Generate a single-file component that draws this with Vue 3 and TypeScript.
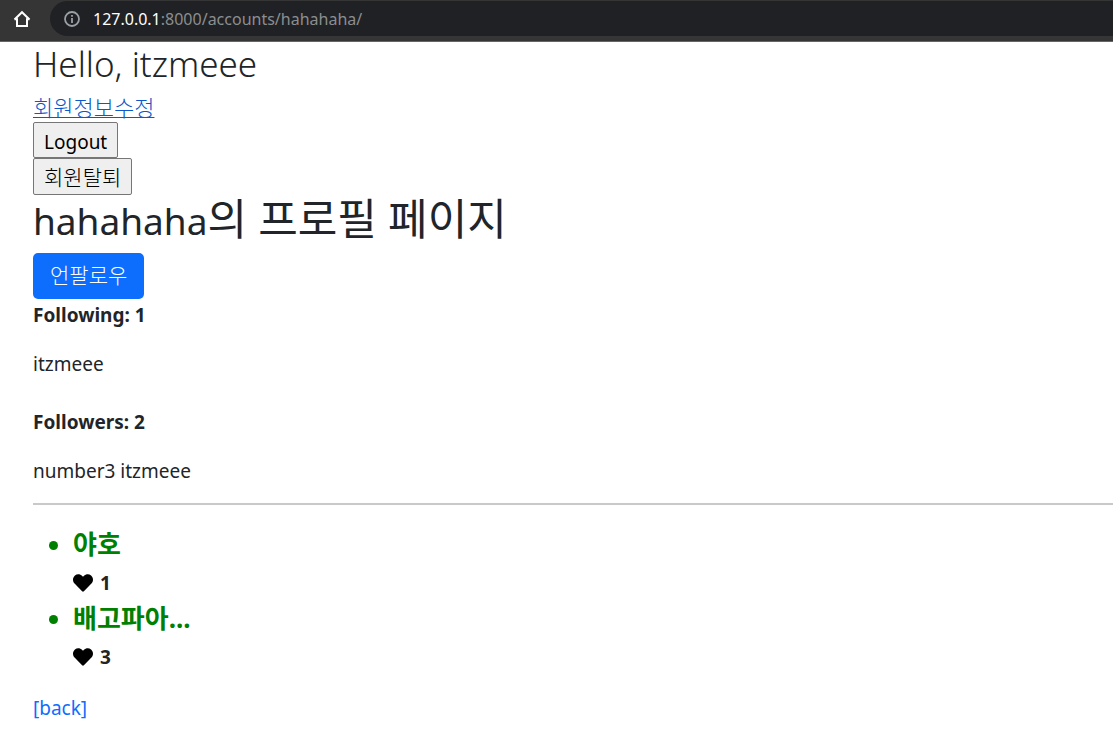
<script setup lang="ts">
interface Post { title: string; likes: number }
const posts: Post[] = [
  { title: '야호', likes: 1 },
  { title: '배고파아...', likes: 3 },
]
</script>

<template>
  <div class="window">
    <header class="toolbar">
      <button class="home" type="button" aria-label="Home">
        <svg width="18" height="18" viewBox="0 0 18 18" fill="none" stroke="#fff" stroke-width="2"><path d="M1.500 9.500 9 2.200l7.500 7.300M1.500 9.300H4V16h10V9.300h2.500" /></svg>
      </button>
      <div class="address">
        <svg width="16" height="16" viewBox="0 0 16 16" fill="none" stroke="#9aa0a6" stroke-width="1.8"><circle cx="8" cy="8" r="7" /><path d="M8 7v5M8 4v1.800" /></svg>
        <span class="url"><span class="host">127.0.0.1</span>:8000/accounts/hahahaha/</span>
      </div>
    </header>
    <main class="page">
      <h3>Hello, itzmeee</h3>
      <a class="edit" href="#">회원정보수정</a>
      <form @submit.prevent><button class="plain" type="submit">Logout</button></form>
      <form @submit.prevent><button class="plain korean" type="submit">회원탈퇴</button></form>
      <h1><span class="user">hahahaha</span>의 프로필 페이지</h1>
      <form class="follow" @submit.prevent><button class="primary" type="submit">언팔로우</button></form>
      <p class="count">Following: 1</p>
      <p class="names">itzmeee</p>
      <p class="count">Followers: 2</p>
      <p class="names last">number3 itzmeee</p>
      <hr />
      <ul>
        <li v-for="post in posts" :key="post.title">
          <h4>{{ post.title }}</h4>
          <div class="likes">
            <svg width="20" height="20" viewBox="0 0 512 512"><path d="M462.3 62.6C407.5 15.9 326 24.3 275.700 76.200L256 96.500l-19.700-20.300C186.100 24.300 104.500 15.900 49.700 62.600c-62.800 53.600-66.100 149.800-9.900 207.900l193.500 199.800c12.500 12.900 32.800 12.900 45.300 0l193.500-199.800c56.300-58.100 53-154.300-9.800-207.900z" /></svg>
            <b>{{ post.likes }}</b>
          </div>
        </li>
      </ul>
      <a class="back" href="#">[back]</a>
    </main>
  </div>
</template>

<style>
body { margin: 0; background: #fff; }
</style>

<style scoped>
.window { color: #212529; font: 19px/30px "Noto Sans", "Noto Sans CJK KR", sans-serif; }
.toolbar { display: flex; align-items: flex-start; height: 42px; padding-top: 1px; background: #353535; border-bottom: 1px solid #666; box-sizing: border-box; overflow: hidden; }
.home { display: flex; width: 18px; height: 36px; margin: 0 19px 0 13px; padding: 0; align-items: center; border: 0; background: none; }
.address { flex: 1; display: flex; align-items: center; gap: 13px; height: 35px; padding-left: 14px; background: #202124; border-radius: 18px 0 0 18px; }
.url { color: #8b8e90; font-size: 16px; line-height: 24px; }
.host { color: #fff; }
.page { padding-left: 33px; }
h1, h3, h4, p, ul { margin: 0; }
h3 { font-size: 35px; line-height: 42px; font-weight: 300; margin: 1px 0 8px; }
.edit { display: block; width: max-content; font-size: 22px; line-height: 29px; font-weight: 300; color: #0a58ca; text-decoration-thickness: 1px; }
form { display: flex; }
.follow { margin-bottom: 1px; }
.plain { height: 36px; padding: 4px 10px 0; border: 1px solid #767676; border-radius: 2px; background: #efefef; color: #000; font: inherit; }
.plain.korean { height: 37px; padding: 0 10px; font-size: 21px; font-weight: 300; }
h1 { font-size: 43px; line-height: 48px; font-weight: 400; margin-bottom: 8px; white-space: nowrap; }
.user { font-size: 37px; }
.primary { height: 46px; padding: 0 17px 2px; border: 0; border-radius: 5px; background: #0d6efd; color: #fff; font: inherit; font-size: 21px; font-weight: 300; }
.count { font-weight: 700; margin-bottom: 19px; }
.names { margin-bottom: 28px; }
.names.last { margin-bottom: 17px; }
hr { margin: 0 0 21px; border: 0; height: 2px; background: #c8c9ca; }
ul { padding-left: 40px; }
li::marker { color: green; font-size: 24px; }
h4 { font-size: 26px; line-height: 36px; color: green; }
.likes { display: flex; align-items: center; gap: 7px; height: 38px; padding-top: 2px; margin-bottom: -2px; }
.back { display: block; width: max-content; margin-top: 19px; color: #0d6efd; text-decoration: none; }
</style>
